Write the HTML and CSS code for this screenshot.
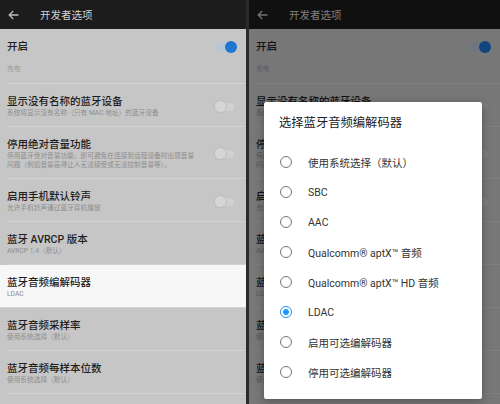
FILE: index.html
```html
<!DOCTYPE html>
<html lang="zh-CN">
<head>
  <meta charset="UTF-8">
  <meta name="viewport" content="width=device-width, initial-scale=1.0">
  <title>开发者选项</title>
  <link rel="stylesheet" href="styles.css">
</head>
<body>
  <div class="screens">
    <!-- 左侧：设置列表 -->
    <div class="phone">
      <div class="topbar">
        <svg class="back" width="11" height="10" viewBox="0 0 11 10"><path d="M10.5 5H1.2M5.2 1L1.2 5l4 4" fill="none" stroke="#bdbdbd" stroke-width="1.3"/></svg>
        <span class="topbar-title">开发者选项</span>
      </div>
      <div class="row switch-row">
        <div class="row-text"><div class="row-title">开启</div></div>
        <span class="toggle on"></span>
      </div>
      <div class="category">充电</div>
      <div class="row">
        <div class="row-text">
          <div class="row-title">显示没有名称的蓝牙设备</div>
          <div class="row-sub">系统将显示没有名称（只有 MAC 地址）的蓝牙设备</div>
        </div>
        <span class="toggle"></span>
      </div>
      <div class="row">
        <div class="row-text">
          <div class="row-title">停用绝对音量功能</div>
          <div class="row-sub">停用蓝牙绝对音量功能，即可避免在连接到远程设备时出现音量问题（例如音量高得让人无法接受或无法控制音量等）。</div>
        </div>
        <span class="toggle"></span>
      </div>
      <div class="row">
        <div class="row-text">
          <div class="row-title">启用手机默认铃声</div>
          <div class="row-sub">允许手机铃声通过蓝牙耳机播放</div>
        </div>
        <span class="toggle"></span>
      </div>
      <div class="row">
        <div class="row-text">
          <div class="row-title">蓝牙 AVRCP 版本</div>
          <div class="row-sub">AVRCP 1.4（默认）</div>
        </div>
      </div>
      <div class="row active">
        <div class="row-text">
          <div class="row-title">蓝牙音频编解码器</div>
          <div class="row-sub">LDAC</div>
        </div>
      </div>
      <div class="row">
        <div class="row-text">
          <div class="row-title">蓝牙音频采样率</div>
          <div class="row-sub">使用系统选择（默认）</div>
        </div>
      </div>
      <div class="row">
        <div class="row-text">
          <div class="row-title">蓝牙音频每样本位数</div>
          <div class="row-sub">使用系统选择（默认）</div>
        </div>
      </div>
    </div>

    <!-- 右侧：编解码器选择对话框 -->
    <div class="phone dimmed">
      <div class="topbar">
        <svg class="back" width="11" height="10" viewBox="0 0 11 10"><path d="M10.5 5H1.2M5.2 1L1.2 5l4 4" fill="none" stroke="#bdbdbd" stroke-width="1.3"/></svg>
        <span class="topbar-title">开发者选项</span>
      </div>
      <div class="row switch-row">
        <div class="row-text"><div class="row-title">开启</div></div>
        <span class="toggle on"></span>
      </div>
      <div class="category">充电</div>
      <div class="row">
        <div class="row-text">
          <div class="row-title">显示没有名称的蓝牙设备</div>
          <div class="row-sub">系统将显示没有名称（只有 MAC 地址）的蓝牙设备</div>
        </div>
        <span class="toggle"></span>
      </div>
      <div class="row">
        <div class="row-text">
          <div class="row-title">停用绝对音量功能</div>
          <div class="row-sub">停用蓝牙绝对音量功能，即可避免在连接到远程设备时出现音量问题（例如音量高得让人无法接受或无法控制音量等）。</div>
        </div>
        <span class="toggle"></span>
      </div>
      <div class="row">
        <div class="row-text">
          <div class="row-title">启用手机默认铃声</div>
          <div class="row-sub">允许手机铃声通过蓝牙耳机播放</div>
        </div>
        <span class="toggle"></span>
      </div>
      <div class="row">
        <div class="row-text">
          <div class="row-title">蓝牙 AVRCP 版本</div>
          <div class="row-sub">AVRCP 1.4（默认）</div>
        </div>
      </div>
      <div class="row">
        <div class="row-text">
          <div class="row-title">蓝牙音频编解码器</div>
          <div class="row-sub">LDAC</div>
        </div>
      </div>
      <div class="row">
        <div class="row-text">
          <div class="row-title">蓝牙音频采样率</div>
          <div class="row-sub">使用系统选择（默认）</div>
        </div>
      </div>
      <div class="row">
        <div class="row-text">
          <div class="row-title">蓝牙音频每样本位数</div>
          <div class="row-sub">使用系统选择（默认）</div>
        </div>
      </div>

      <div class="dialog">
        <div class="dialog-title">选择蓝牙音频编解码器</div>
        <div class="option"><span class="radio"></span>使用系统选择（默认）</div>
        <div class="option"><span class="radio"></span>SBC</div>
        <div class="option"><span class="radio"></span>AAC</div>
        <div class="option"><span class="radio"></span>Qualcomm® aptX™ 音频</div>
        <div class="option"><span class="radio"></span>Qualcomm® aptX™ HD 音频</div>
        <div class="option"><span class="radio checked"></span>LDAC</div>
        <div class="option"><span class="radio"></span>启用可选编解码器</div>
        <div class="option"><span class="radio"></span>停用可选编解码器</div>
      </div>
    </div>
  </div>
</body>
</html>
```

FILE: styles.css
```css
* {
  box-sizing: border-box;
}
body {
  margin: 0;
  width: 500px;
  height: 404px;
  overflow: hidden;
  background-color: #2a2a2a;
  font-family: Roboto, "Noto Sans CJK SC", sans-serif;
}
.screens {
  display: flex;
  gap: 3px;
  height: 404px;
}
.phone {
  position: relative;
  flex: 0 0 246px;
  background-color: #c6c6c6;
  overflow: hidden;
}
.phone.dimmed {
  flex: 1;
}
.phone.dimmed::after {
  content: "";
  position: absolute;
  inset: 0;
  background-color: rgba(0, 0, 0, 0.4);
}
.topbar {
  height: 29px;
  display: flex;
  align-items: center;
  padding-left: 8px;
  background-color: #1c1c1c;
}
.topbar-title {
  margin-left: 21px;
  font-size: 10.5px;
  color: #d2d2d2;
}
.row {
  display: flex;
  align-items: center;
  margin-left: 7px;
  padding: 11px 12px 8px 0;
  border-bottom: 1px solid #d3d3d3;
}
.row.active {
  margin-left: 0;
  padding-left: 7px;
  background-color: #f7f7f7;
}
.row-text {
  flex: 1;
}
.row-title {
  font-size: 10.5px;
  font-weight: 500;
  line-height: 13px;
  color: #1e1e1e;
}
.row-sub {
  max-width: 190px;
  margin-top: 1px;
  font-size: 6.7px;
  line-height: 9px;
  color: #8e8e8e;
}
.switch-row {
  padding-bottom: 10px;
  border-bottom: none;
}
.category {
  margin-left: 7px;
  padding: 2px 0 10px;
  font-size: 6.7px;
  line-height: 8px;
  color: #9a9a9a;
  border-bottom: 1px solid #d3d3d3;
}
.toggle {
  position: relative;
  width: 18px;
  height: 8px;
  border-radius: 4px;
  background-color: #d0d0d0;
}
.toggle::after {
  content: "";
  position: absolute;
  top: -2px;
  left: -1px;
  width: 11px;
  height: 11px;
  border-radius: 50%;
  background-color: #d6d6d6;
  box-shadow: 0 0 0 1px #bcbcbc;
}
.toggle.on {
  background-color: #b7c7d8;
}
.toggle.on::after {
  left: auto;
  right: -3px;
  top: -2px;
  width: 12px;
  height: 12px;
  background-color: #1d76cf;
  box-shadow: none;
}
.dialog {
  position: absolute;
  z-index: 1;
  left: 15px;
  top: 102px;
  width: 218px;
  height: 297px;
  padding: 14px 0 12px;
  border-radius: 2px;
  background-color: #fff;
  box-shadow: 0 2px 8px rgba(0, 0, 0, 0.3);
}
.dialog-title {
  margin-bottom: 16px;
  padding-left: 15px;
  font-size: 12.3px;
  line-height: 15px;
  color: #212121;
}
.option {
  display: flex;
  align-items: center;
  height: 30px;
  padding-left: 16px;
  font-size: 10.5px;
  color: #333;
}
.radio {
  flex: none;
  width: 12px;
  height: 12px;
  margin-right: 16px;
  border: 1.5px solid #757575;
  border-radius: 50%;
}
.radio.checked {
  border-color: #2196f3;
  background: radial-gradient(circle, #2196f3 0 2.6px, #fff 3.2px);
}
```
